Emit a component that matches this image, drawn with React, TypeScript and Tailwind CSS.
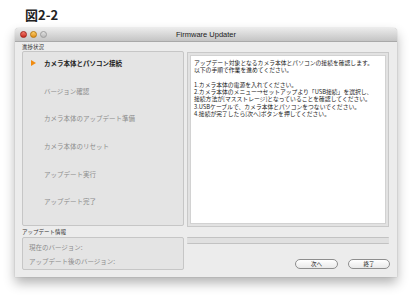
const FONT = { fontFamily: '"Noto Sans CJK JP", "Noto Sans", sans-serif' }

const STEPS = [
  'カメラ本体とパソコン接続',
  'バージョン確認',
  'カメラ本体のアップデート準備',
  'カメラ本体のリセット',
  'アップデート実行',
  'アップデート完了',
]

const MESSAGE = [
  'アップデート対象となるカメラ本体とパソコンの接続を確認します。',
  '以下の手順で作業を進めてください。',
  '',
  '1.カメラ本体の電源を入れてください。',
  '2.カメラ本体のメニュー→セットアップより「USB接続」を選択し、',
  '接続方法が[マスストレージ]となっていることを確認してください。',
  '3.USBケーブルで、カメラ本体とパソコンをつないでください。',
  '4.接続が完了したら[次へ]ボタンを押してください。',
]

export default function App() {
  return (
    <div className="w-[412px] h-[300px] bg-white overflow-hidden" style={FONT}>
      <div className="h-[28px] pt-[8px] pl-[25px]">
        <div className="text-[13px] leading-[14px] font-bold text-[#222]">図2-2</div>
      </div>

      <div className="ml-[15px] w-[382px] h-[249px] bg-[#ececec] rounded-t-[4px] shadow-[0_6px_12px_rgba(0,0,0,0.3),0_0_1px_rgba(0,0,0,0.4)] flex flex-col">
        {/* title bar */}
        <div className="h-[14px] rounded-t-[4px] bg-gradient-to-b from-[#ebebeb] to-[#c4c4c4] border-b border-[#a9a9a9] flex items-center relative">
          <div className="flex items-center gap-[3px] pl-[5px]">
            <span className="w-[7px] h-[7px] rounded-full bg-gradient-to-b from-[#f27b6f] to-[#c8231a] border border-[#a3231b]" />
            <span className="w-[7px] h-[7px] rounded-full bg-gradient-to-b from-[#fbd06a] to-[#e08e0a] border border-[#b9780d]" />
            <span className="w-[7px] h-[7px] rounded-full bg-gradient-to-b from-[#e2e2e2] to-[#b9b9b9] border border-[#9d9d9d]" />
          </div>
          <div className="absolute inset-0 flex items-center justify-center text-[7.5px] text-[#222]" style={{ fontFamily: '"Liberation Sans", Arial, sans-serif' }}>
            Firmware Updater
          </div>
        </div>

        {/* body */}
        <div className="flex gap-[3px] px-[7px]">
          {/* left column */}
          <div className="w-[162px] flex flex-col">
            <div className="h-[9px] pt-[1px] text-[5.5px] leading-[8px] text-[#333]">進捗状況</div>
            <div className="h-[175px] bg-[#e4e4e4] border border-[#c6c6c6] rounded-[2px] flex flex-col pt-[7px]">
              {STEPS.map((s, i) => (
                <div key={s} className="h-[29px] flex items-start">
                  <div className="w-[21px] h-[8px] flex items-center justify-center">
                    {i === 0 && (
                      <svg width="5" height="6" viewBox="0 0 5 6">
                        <path d="M0 0 L5 3 L0 6 Z" fill="#f08c12" />
                      </svg>
                    )}
                  </div>
                  <span className={i === 0 ? 'text-[6.5px] leading-[8px] font-bold text-[#222]' : 'text-[6.5px] leading-[8px] text-[#8c8c8c]'}>{s}</span>
                </div>
              ))}
            </div>
            <div className="h-[11px] pt-[2px] text-[5.5px] leading-[9px] text-[#333]">アップデート情報</div>
            <div className="h-[33px] bg-[#e4e4e4] border border-[#c6c6c6] rounded-[2px] flex flex-col justify-center gap-[5px] pl-[6px] pt-[2px] text-[6.5px] leading-[9px] text-[#8c8c8c]">
              <div>現在のバージョン:</div>
              <div>アップデート後のバージョン:</div>
            </div>
          </div>

          {/* right column */}
          <div className="w-[202px] flex flex-col pt-[10px]">
            <div className="h-[175px] border border-[#c9c9c9] bg-[#e2e2e2] p-[2px]">
              <div className="h-full bg-white border border-[#d2d2d2] px-[3px] pt-[3px] text-[5.8px] leading-[7.3px] text-[#222] whitespace-nowrap">
                {MESSAGE.map((l, i) => (
                  <div key={i} className="h-[7.3px]">{l}</div>
                ))}
              </div>
            </div>
            <div className="mt-[10px] h-[7px] bg-[#e0e0e0] border-t border-b border-[#c2c2c2] rounded-[1px]" />
            <div className="mt-[15px] flex justify-end gap-[10px] mr-[-1px]">
              <button className="w-[43px] h-[10px] rounded-full bg-gradient-to-b from-white to-[#e9e9e9] border border-[#8e8e8e] text-[5.5px] leading-[8px] text-[#222]">次へ</button>
              <button className="w-[42px] h-[10px] rounded-full bg-gradient-to-b from-white to-[#e9e9e9] border border-[#8e8e8e] text-[5.5px] leading-[8px] text-[#222]">終了</button>
            </div>
          </div>
        </div>
      </div>
    </div>
  )
}
